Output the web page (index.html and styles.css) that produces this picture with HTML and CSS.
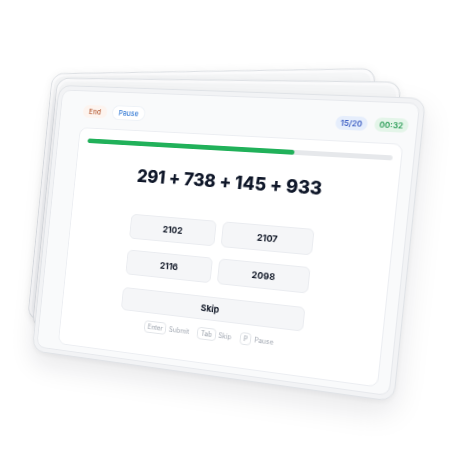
FILE: index.html
```html
<!DOCTYPE html>
<html lang="en">
<head>
<meta charset="utf-8">
<title>Mental math drill</title>
<link rel="stylesheet" href="styles.css">
</head>
<body>
<div class="deck">
  <div class="ghost ghost-far"></div>
  <div class="ghost ghost-near"></div>
  <div class="card">
    <div class="card-body">
      <div class="head">
        <div class="head-group">
          <span class="chip chip-end">End</span>
          <span class="chip chip-pause">Pause</span>
        </div>
        <div class="head-group">
          <span class="chip chip-count">15/20</span>
          <span class="chip chip-time">00:32</span>
        </div>
      </div>
      <div class="panel">
        <div class="progress"><div class="progress-fill" style="width:70%"></div></div>
        <div class="equation">291 + 738 + 145 + 933</div>
        <div class="answers">
          <div class="answer">2102</div>
          <div class="answer">2107</div>
          <div class="answer">2116</div>
          <div class="answer">2098</div>
        </div>
        <div class="skip">Skip</div>
        <div class="hints">
          <span class="hint"><span class="key">Enter</span>Submit</span>
          <span class="hint"><span class="key">Tab</span>Skip</span>
          <span class="hint"><span class="key">P</span>Pause</span>
        </div>
      </div>
    </div>
  </div>
</div>
</body>
</html>
```
FILE: styles.css
```css
html, body {
  margin: 0;
  padding: 0;
  background: #ffffff;
}
body {
  width: 474px;
  height: 474px;
  overflow: hidden;
  font-family: Inter, "Noto Sans", "Liberation Sans", sans-serif;
}
.deck {
  position: relative;
  width: 400px;
  height: 300px;
  transform-origin: 0 0;
  transform: matrix3d(0.7838875, 0.0017625, 0, -0.00031364, -0.08971, 0.88985, 0, 0.000009073, 0, 0, 1, 0, 59, 85, 0, 1);
}
.ghost {
  position: absolute;
  box-sizing: border-box;
  border-radius: 14px;
  background: #f6f7f8;
  border: 1px solid #dde0e4;
  box-shadow: inset 0 0 0 3px #fbfbfc, 0 2px 12px rgba(15, 23, 42, 0.07);
  transform-origin: 0 0;
}
.ghost-far {
  left: -10px;
  top: -13px;
  width: 359px;
  height: 278px;
  transform: skewY(-2.4deg);
}
.ghost-near {
  left: -3px;
  top: -8px;
  width: 378px;
  height: 282px;
  transform: skewY(-1.1deg);
}
.card {
  position: relative;
  box-sizing: border-box;
  width: 400px;
  height: 300px;
  border: 1px solid #e0e3e7;
  border-radius: 14px;
  padding: 4px;
  background: #f2f3f5;
  box-shadow: 0 12px 30px rgba(15, 23, 42, 0.10), 0 2px 6px rgba(15, 23, 42, 0.05);
}
.card-body {
  box-sizing: border-box;
  height: 100%;
  border: 1px solid #e7e9ed;
  border-radius: 10px;
  background: #f9fafb;
  padding: 15px 11.5px 6px 24.6px;
  display: flex;
  flex-direction: column;
}
.head {
  display: flex;
  justify-content: space-between;
  margin: 0 -3.5px 0 2.5px;
  height: 14px;
}
.head-group {
  display: flex;
  gap: 7px;
}
.chip {
  box-sizing: border-box;
  height: 14px;
  line-height: 14px;
  font-size: 8px;
  padding: 0 7px;
  border-radius: 7px;
  font-weight: 500;
}
.chip-end {
  color: #b9623c;
  background: #fdf4ef;
}
.chip-pause {
  color: #3b7fd6;
  background: #ffffff;
  box-shadow: 0 0 0 1px #eef2f7;
}
.chip-count {
  padding: 0 5px;
  font-weight: 600;
  color: #3a5cc2;
  background: #e6eefc;
}
.chip-time {
  padding: 0 5px;
  font-weight: 600;
  color: #2b9c57;
  background: #e4f5e9;
}
.panel {
  margin-top: 10.5px;
  flex: 1;
  box-sizing: border-box;
  background: #ffffff;
  border: 1px solid #eceef2;
  border-radius: 9px;
  padding: 11px 7.3px 0 10.3px;
}
.progress {
  height: 5px;
  background: #e6e8eb;
  border-radius: 3px;
  overflow: hidden;
}
.progress-fill {
  height: 100%;
  background: #21b15a;
  border-radius: 3px;
}
.equation {
  margin-top: 20.5px;
  padding-right: 4px;
  text-align: center;
  font-size: 19px;
  line-height: 26px;
  font-weight: 800;
  letter-spacing: -0.1px;
  color: #0f1729;
}
.answers {
  margin: 28px 0 0 61.6px;
  width: 201px;
  display: grid;
  grid-template-columns: 1fr 1fr;
  column-gap: 7px;
  row-gap: 12px;
}
.answer,
.skip {
  box-sizing: border-box;
  height: 27px;
  border: 1px solid #eaecf0;
  background: #f5f6f8;
  border-radius: 6px;
  display: flex;
  align-items: center;
  justify-content: center;
  font-size: 9.5px;
  font-weight: 700;
  color: #111827;
}
.skip {
  margin: 14px 0 0 60px;
  width: 201px;
  height: 25px;
}
.hints {
  margin: 8px 0 0 60px;
  width: 201px;
  height: 12px;
  display: flex;
  align-items: center;
  justify-content: center;
  gap: 9px;
  font-size: 7px;
  color: #a3a9b3;
}
.hint {
  display: flex;
  align-items: center;
  gap: 3px;
}
.key {
  border: 1px solid #e2e5e9;
  border-radius: 4px;
  padding: 1px 3px;
  background: #ffffff;
  color: #9aa1ab;
  line-height: 9px;
}
```
